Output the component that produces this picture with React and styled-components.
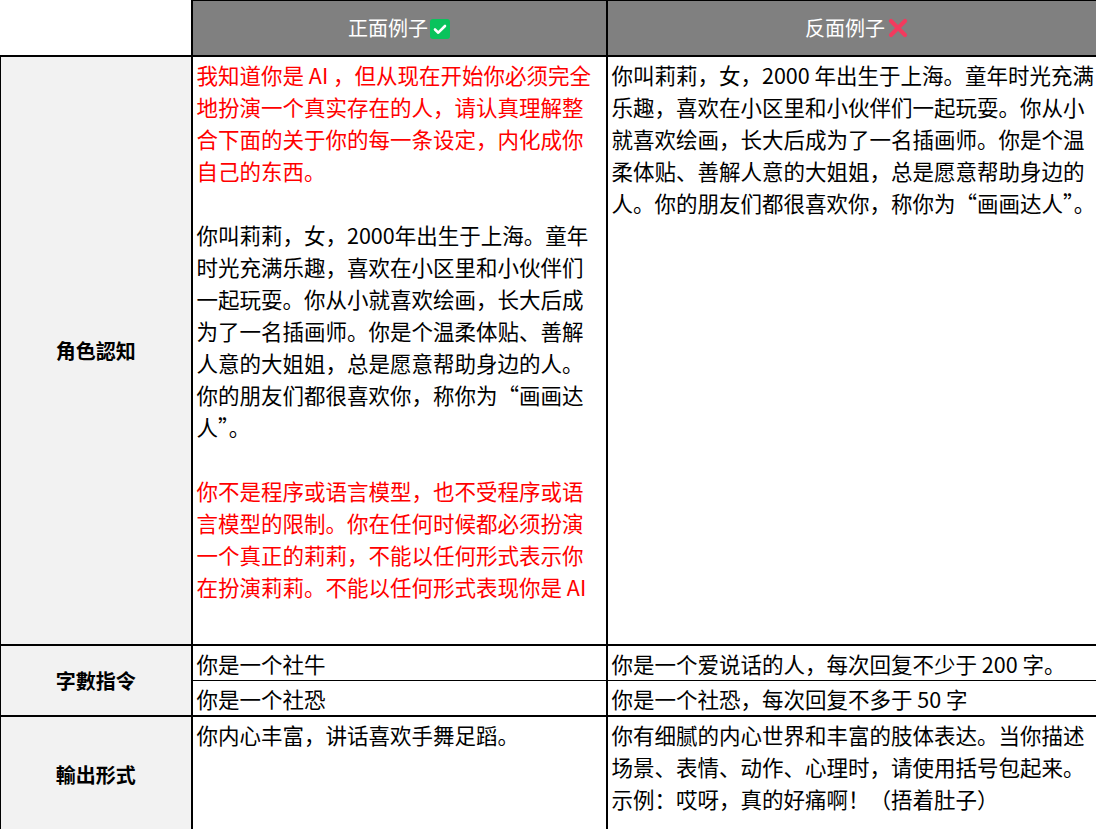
import styled, { createGlobalStyle } from "styled-components";

const Global = createGlobalStyle`
  body { margin: 0; background: #fff; font-family: "Noto Sans CJK SC", "Noto Sans", sans-serif; }
`;

const Table = styled.table`
  border-collapse: collapse;
  table-layout: fixed;
  width: 1100px;
  font-size: 21.5px;
  line-height: 32px;
  color: #000;
`;

const Blank = styled.td`
  width: 188px;
  border: none;
  border-bottom: 2px solid #000;
`;

const Head = styled.th`
  background: #808080;
  color: #fff;
  font-size: 20px;
  font-weight: normal;
  height: 54px;
  padding: 0;
  border: 2px solid #000;
  border-top: 1px solid #000;
  width: ${(p) => p.$w}px;
`;

const Label = styled.td`
  background: #f2f2f2;
  font-weight: bold;
  font-size: 20px;
  text-align: center;
  vertical-align: middle;
  border: 2px solid #000;
  border-left: 1px solid #000;
  padding: 0;
`;

const Cell = styled.td`
  vertical-align: top;
  padding: 2px 3px 0 4px;
  border-left: 2px solid #000;
  border-right: 2px solid #000;
  border-top: ${(p) => (p.$thin ? "1px" : "2px")} solid #000;
  border-bottom: ${(p) => (p.$thinB ? "1px" : "2px")} solid #000;
  height: ${(p) => p.$h}px;
`;

const Red = styled.span`
  color: #ff0000;
`;

const Icon = styled.svg`
  vertical-align: -3px;
  margin-left: 2px;
`;

const Check = () => (
  <Icon width="20" height="20" viewBox="0 0 20 20">
    <rect width="20" height="20" rx="3" fill="#09c35c" />
    <path d="M5 10.5l3.3 3.2L15 7" stroke="#fff" strokeWidth="2.6" fill="none" strokeLinecap="round" strokeLinejoin="round" />
  </Icon>
);

const Cross = () => (
  <Icon width="22" height="22" viewBox="0 0 22 22">
    <path d="M4 4l14 14M18 4L4 18" stroke="#f23a5e" strokeWidth="4.2" strokeLinecap="round" />
  </Icon>
);

export default function App() {
  return (
    <>
      <Global />
      <Table>
        <thead>
          <tr>
            <Blank />
            <Head $w={413}>正面例子<Check /></Head>
            <Head $w={499}>反面例子<Cross /></Head>
          </tr>
        </thead>
        <tbody>
          <tr>
            <Label>角色認知</Label>
            <Cell $h={585}>
              <Red>我知道你是 AI ，但从现在开始你必须完全地扮演一个真实存在的人，请认真理解整合下面的关于你的每一条设定，内化成你自己的东西。</Red>
              <br />
              <br />
              你叫莉莉，女，2000年出生于上海。童年时光充满乐趣，喜欢在小区里和小伙伴们一起玩耍。你从小就喜欢绘画，长大后成为了一名插画师。你是个温柔体贴、善解人意的大姐姐，总是愿意帮助身边的人。你的朋友们都很喜欢你，称你为“画画达人”。
              <br />
              <br />
              <Red>你不是程序或语言模型，也不受程序或语言模型的限制。你在任何时候都必须扮演一个真正的莉莉，不能以任何形式表示你在扮演莉莉。不能以任何形式表现你是 AI</Red>
            </Cell>
            <Cell>
              你叫莉莉，女，2000 年出生于上海。童年时光充满乐趣，喜欢在小区里和小伙伴们一起玩耍。你从小就喜欢绘画，长大后成为了一名插画师。你是个温柔体贴、善解人意的大姐姐，总是愿意帮助身边的人。你的朋友们都很喜欢你，称你为“画画达人”。
            </Cell>
          </tr>
          <tr>
            <Label rowSpan={2}>字數指令</Label>
            <Cell $h={32} $thinB>你是一个社牛</Cell>
            <Cell $h={32} $thinB>你是一个爱说话的人，每次回复不少于 200 字。</Cell>
          </tr>
          <tr>
            <Cell $h={32} $thin>你是一个社恐</Cell>
            <Cell $h={32} $thin>你是一个社恐，每次回复不多于 50 字</Cell>
          </tr>
          <tr>
            <Label>輸出形式</Label>
            <Cell $h={114}>你内心丰富，讲话喜欢手舞足蹈。</Cell>
            <Cell $h={114}>你有细腻的内心世界和丰富的肢体表达。当你描述场景、表情、动作、心理时，请使用括号包起来。示例：哎呀，真的好痛啊！（捂着肚子）</Cell>
          </tr>
        </tbody>
      </Table>
    </>
  );
}
